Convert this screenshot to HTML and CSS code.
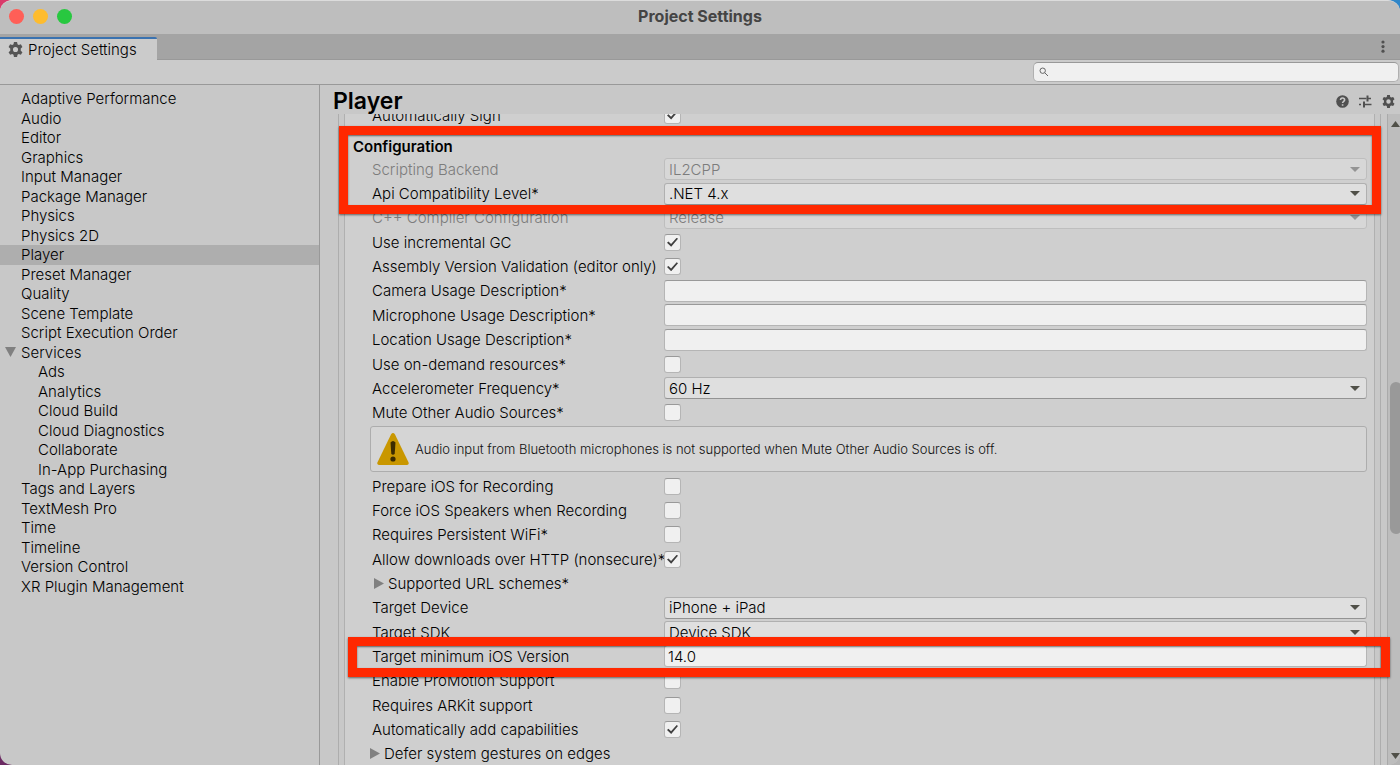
FILE: index.html
```html
<!DOCTYPE html>
<html lang="en">
<head>
<meta charset="utf-8">
<title>Project Settings</title>
<link rel="stylesheet" href="styles.css">
</head>
<body>
<svg class="defs" aria-hidden="true">
  <symbol id="gear" viewBox="0 0 24 24"><path fill-rule="evenodd" d="M9.500 0h5l.7 3.500 2 1.200 3.400-1.200 2.500 4.300-2.700 2.400v3.600l2.700 2.400-2.500 4.300-3.400-1.200-2 1.200-.7 3.500h-5l-.7-3.500-2-1.200-3.400 1.200L.9 16.200l2.700-2.400v-3.600L.9 7.800l2.500-4.300 3.400 1.200 2-1.200zM12 7.900a4.100 4.100 0 1 0 0 8.200a4.100 4.100 0 1 0 0-8.200z"/></symbol>
</svg>
<div class="window">
  <header class="titlebar">
    <div class="lights">
      <button class="light close" aria-label="Close"></button>
      <button class="light minimize" aria-label="Minimize"></button>
      <button class="light maximize" aria-label="Zoom"></button>
    </div>
    <h1>Project Settings</h1>
  </header>
  <div class="tabbar">
    <button class="tab"><svg class="icon-tab"><use href="#gear"/></svg>Project Settings</button>
    <button class="icon-button more" aria-label="More"><svg width="6" height="14" viewBox="0 0 6 14"><circle cx="3" cy="2" r="1.600"/><circle cx="3" cy="6.600" r="1.600"/><circle cx="3" cy="11.200" r="1.600"/></svg></button>
  </div>
  <div class="toolbar">
    <label class="search">
      <svg width="10" height="10" viewBox="0 0 10 10"><circle cx="3.700" cy="3.700" r="2.700"/><path d="M5.700 5.700L9 9"/></svg>
      <input type="search" aria-label="Search settings">
    </label>
  </div>
  <div class="body">
    <nav class="sidebar">
      <ul class="tree">
        <li><a href="#">Adaptive Performance</a></li>
        <li><a href="#">Audio</a></li>
        <li><a href="#">Editor</a></li>
        <li><a href="#">Graphics</a></li>
        <li><a href="#">Input Manager</a></li>
        <li><a href="#">Package Manager</a></li>
        <li><a href="#">Physics</a></li>
        <li><a href="#">Physics 2D</a></li>
        <li class="selected"><a href="#">Player</a></li>
        <li><a href="#">Preset Manager</a></li>
        <li><a href="#">Quality</a></li>
        <li><a href="#">Scene Template</a></li>
        <li><a href="#">Script Execution Order</a></li>
        <li class="parent"><svg width="11" height="10" viewBox="0 0 11 10"><path d="M0 0h11L5.500 10z"/></svg><a href="#">Services</a></li>
        <li class="child"><a href="#">Ads</a></li>
        <li class="child"><a href="#">Analytics</a></li>
        <li class="child"><a href="#">Cloud Build</a></li>
        <li class="child"><a href="#">Cloud Diagnostics</a></li>
        <li class="child"><a href="#">Collaborate</a></li>
        <li class="child"><a href="#">In-App Purchasing</a></li>
        <li><a href="#">Tags and Layers</a></li>
        <li><a href="#">TextMesh Pro</a></li>
        <li><a href="#">Time</a></li>
        <li><a href="#">Timeline</a></li>
        <li><a href="#">Version Control</a></li>
        <li><a href="#">XR Plugin Management</a></li>
      </ul>
    </nav>
    <main class="main">
      <div class="heading">
        <h2>Player</h2>
        <button class="icon-button" aria-label="Help"><svg width="13" height="13" viewBox="0 0 13 13"><circle cx="6.500" cy="6.500" r="6.300"/><path class="mark" d="M4.500 5.100c0-2.900 4.100-2.700 4.100-.2 0 1.300-2 1.500-2 3.100M6.600 9.200v1.500"/></svg></button>
        <button class="icon-button" aria-label="Presets"><svg width="13" height="13" viewBox="0 0 13 13"><path class="line" d="M0 3.500h7M7.500 3.500H12M0 9.500h2M4 9.500h8.500"/><path d="M7.500 .5h2v6h-2zM4 6.500h2v6H4z"/></svg></button>
        <button class="icon-button" aria-label="Settings"><svg width="13" height="13"><use href="#gear"/></svg></button>
      </div>
      <div class="viewport">
        <div class="outer"><form class="inner">
          <div class="row first"><label for="sign">Automatically Sign</label><input type="checkbox" id="sign" checked></div>
          <h3>Configuration</h3>
          <div class="group before">
            <div class="row off"><label for="backend">Scripting Backend</label><span class="drop"><select id="backend" disabled><option>IL2CPP</option></select></span></div>
            <div class="row"><label for="api">Api Compatibility Level*</label><span class="drop"><select id="api"><option>.NET 4.x</option></select></span></div>
            <div class="row off"><label for="cpp">C++ Compiler Configuration</label><span class="drop"><select id="cpp" disabled><option>Release</option></select></span></div>
            <div class="row"><label for="gc">Use incremental GC</label><input type="checkbox" id="gc" checked></div>
            <div class="row"><label for="asm">Assembly Version Validation (editor only)</label><input type="checkbox" id="asm" checked></div>
            <div class="row"><label for="cam">Camera Usage Description*</label><input type="text" id="cam"></div>
            <div class="row"><label for="mic">Microphone Usage Description*</label><input type="text" id="mic"></div>
            <div class="row"><label for="loc">Location Usage Description*</label><input type="text" id="loc"></div>
            <div class="row"><label for="odr">Use on-demand resources*</label><input type="checkbox" id="odr"></div>
            <div class="row"><label for="acc">Accelerometer Frequency*</label><span class="drop"><select id="acc"><option>60 Hz</option></select></span></div>
            <div class="row"><label for="mute">Mute Other Audio Sources*</label><input type="checkbox" id="mute"></div>
          </div>
          <div class="notice">
            <svg width="32" height="32" viewBox="0 0 32 32"><path class="warn" d="M14 1.500Q16-1.300 18 1.500L31.600 29.500Q32 32 30 32H2Q0 32 .4 29.500z"/><path d="M13.500 9.500q2.500-3 5 0l-.8 11.500q-1.700 1.600-3.400 0z"/><circle cx="16" cy="26" r="2.600"/></svg>
            <p>Audio input from Bluetooth microphones is not supported when Mute Other Audio Sources is off.</p>
          </div>
          <div class="group after">
            <div class="row"><label for="prep">Prepare iOS for Recording</label><input type="checkbox" id="prep"></div>
            <div class="row"><label for="force">Force iOS Speakers when Recording</label><input type="checkbox" id="force"></div>
            <div class="row"><label for="wifi">Requires Persistent WiFi*</label><input type="checkbox" id="wifi"></div>
            <div class="row"><label for="http">Allow downloads over HTTP (nonsecure)*</label><input type="checkbox" id="http" checked></div>
            <div class="row"><button type="button" class="fold nested"><svg width="10" height="11" viewBox="0 0 10 11"><path d="M0 0v11l10-5.500z"/></svg>Supported URL schemes*</button></div>
            <div class="row"><label for="device">Target Device</label><span class="drop"><select id="device"><option>iPhone + iPad</option></select></span></div>
            <div class="row"><label for="sdk">Target SDK</label><span class="drop"><select id="sdk"><option>Device SDK</option></select></span></div>
            <div class="row"><label for="ios">Target minimum iOS Version</label><input type="text" id="ios" value="14.0"></div>
            <div class="row"><label for="promo">Enable ProMotion Support</label><input type="checkbox" id="promo"></div>
            <div class="row"><label for="arkit">Requires ARKit support</label><input type="checkbox" id="arkit"></div>
            <div class="row"><label for="caps">Automatically add capabilities</label><input type="checkbox" id="caps" checked></div>
            <div class="row"><button type="button" class="fold"><svg width="10" height="11" viewBox="0 0 10 11"><path d="M0 0v11l10-5.500z"/></svg>Defer system gestures on edges</button></div>
          </div>
        </form></div>
        <div class="scrollbar">
          <svg width="9" height="6" viewBox="0 0 9 6"><path d="M0 6L4.500 0 9 6z"/></svg>
          <div class="track"><div class="thumb"></div></div>
          <svg width="9" height="6" viewBox="0 0 9 6"><path d="M0 0h9L4.500 6z"/></svg>
        </div>
      </div>
      <div class="callout config"></div>
      <div class="callout version"></div>
    </main>
  </div>
</div>
</body>
</html>
```
FILE: styles.css
```css
* { box-sizing: border-box; }
body {
  margin: 0;
  background: linear-gradient(90deg, #d93a6a 50%, #2f86c8 50%) top / 100% 50% no-repeat, linear-gradient(90deg, #6b2a62 50%, #b5b5b5 50%);
  font: 300 15px/19px Inter, "Liberation Sans", sans-serif;
  color: #000;
}
h1, h2, h3, p, ul { margin: 0; padding: 0; }
button, input, select { font: inherit; color: inherit; margin: 0; padding: 0; border: 0; background: none; }
a { color: inherit; text-decoration: none; }
.defs { display: none; }
.window {
  height: 100vh;
  display: flex;
  flex-direction: column;
  overflow: hidden;
  border-top: 1px solid #dcdcdc;
  border-radius: 12px;
  background: #c8c8c8;
}
.titlebar {
  height: 33px;
  flex: none;
  display: grid;
  grid-template-columns: 1fr auto 1fr;
  align-items: center;
  padding: 0 9px 2px;
  background: #bebebe;
}
.titlebar h1 { font-size: 16px; line-height: 19px; font-weight: 700; color: #444; }
.lights { display: flex; gap: 9px; }
.light { width: 15px; height: 15px; border-radius: 50%; }
.close { background: #ff5f57; }
.minimize { background: #febc2e; }
.maximize { background: #28c840; }
.tabbar {
  height: 26px;
  flex: none;
  display: flex;
  align-items: flex-end;
  justify-content: space-between;
  background: #a4a4a4;
  box-shadow: inset 0 -1px #999;
}
.tab {
  height: 23px;
  display: flex;
  align-items: center;
  gap: 5px;
  padding: 0 20px 1px 8px;
  border-top: 2px solid #3a72b0;
  border-radius: 0 2px 0 0;
  background: #cbcbcb;
}
.icon-tab { width: 15px; height: 15px; fill: #555; }
.icon-button { display: flex; fill: #505050; }
.more { padding: 0 14px 6px 0; }
.toolbar {
  height: 25px;
  flex: none;
  display: flex;
  justify-content: flex-end;
  align-items: flex-start;
  padding: 2px 1px 0 0;
  background: #cbcbcb;
  border-bottom: 1px solid #999;
}
.search {
  width: 366px;
  height: 20px;
  display: flex;
  align-items: center;
  gap: 5px;
  padding: 0 5px;
  border: 1px solid #b0b0b0;
  border-top-color: #999;
  border-radius: 5px;
  background: #f0f0f0;
}
.search svg { fill: none; stroke: #666; stroke-width: 1; }
.search input { flex: 1; min-width: 0; outline: 0; }
.body { flex: 1; min-height: 0; display: flex; }
.sidebar { width: 320px; flex: none; padding-top: 4px; border-right: 1px solid #999; }
.tree { list-style: none; display: grid; grid-auto-rows: 1fr; min-height: 507px; }
.tree li { display: flex; align-items: center; padding-left: 21px; }
.tree .selected { background: #aeaeae; }
.tree .parent { padding-left: 5px; gap: 5px; fill: #808080; }
.tree .child { padding-left: 38px; }
.main { flex: 1; min-width: 0; position: relative; display: flex; flex-direction: column; }
.heading { height: 29px; flex: none; display: flex; align-items: center; gap: 10px; padding: 4px 5px 0 13px; }
.heading h2 { flex: 1; font-size: 23px; line-height: 25px; font-weight: 600; color: #000; }
.mark { fill: none; stroke: #c8c8c8; stroke-width: 1.600; }
.line { fill: none; stroke: #505050; stroke-width: 1.500; }
.viewport { flex: 1; min-height: 0; display: flex; overflow: hidden; }
.outer {
  flex: 1;
  min-width: 0;
  display: flex;
  margin: 0 6px 0 18px;
  padding: 0 5px;
  border: solid #adadad;
  border-width: 0 1px;
}
.inner {
  flex: 1;
  min-width: 0;
  margin-top: -11px;
  padding: 0 7px 0 25px;
  border: solid #b0b0b0;
  border-width: 0 1px;
  background: #cfcfcf;
}
.inner h3 { height: 22px; margin: 8px 0 0 -17px; font-size: 15px; line-height: 24px; font-weight: 600; }
.group { display: grid; grid-auto-rows: 1fr; }
.before { min-height: 268px; }
.after { min-height: 292px; }
.row { display: grid; grid-template-columns: 292px 1fr; align-items: center; padding-left: 2px; }
.first { height: 24px; }
.row label { white-space: nowrap; }
.off { color: #7c7c7c; }
.drop { display: grid; align-items: center; }
.drop select, .drop::after { grid-area: 1 / 1; }
.drop::after {
  content: "";
  justify-self: end;
  margin-right: 7px;
  border: solid transparent;
  border-width: 5px 5px 0;
  border-top-color: #505048;
}
.off .drop::after { border-top-color: #949494; }
.row select {
  appearance: none;
  width: 100%;
  height: 22px;
  padding: 0 4px;
  border: 1px solid #b0b0b0;
  border-bottom-color: #939393;
  border-radius: 3px;
  background: #dfdfdf;
}
.row select:disabled { opacity: 1; color: #7c7c7c; background: #d7d7d7; border-color: #bebebe; }
.row input[type="text"] {
  width: 100%;
  height: 22px;
  padding: 0 3px;
  border: 1px solid #b5b5b5;
  border-top-color: #999;
  border-radius: 3px;
  background: #f0f0f0;
}
.row input[type="checkbox"] {
  appearance: none;
  width: 17px;
  height: 17px;
  border: 1px solid #b5b5b5;
  border-top-color: #999;
  border-radius: 3px;
  background: #f0f0f0;
  display: grid;
  place-items: center;
}
.row input:checked::before {
  content: "";
  width: 11px;
  height: 9px;
  background: #404040;
  clip-path: polygon(0 55%, 13% 42%, 37% 70%, 88% 0, 100% 12%, 38% 100%);
}
.notice {
  min-height: 46px;
  display: flex;
  align-items: center;
  gap: 6px;
  margin: 1px 0 2px;
  padding: 0 6px;
  border: 1px solid #adadad;
  border-radius: 3px;
  background: #d5d5d5;
  font-size: 13px;
  color: #101010;
}
.notice svg { fill: #3c2c00; }
.notice .warn { fill: #c99700; }
.fold { grid-column: 1 / -1; display: flex; align-items: center; gap: 4px; margin-left: -2px; fill: #808080; }
.nested { padding-left: 4px; }
.scrollbar {
  width: 13px;
  display: flex;
  flex-direction: column;
  align-items: center;
  padding: 7px 0 6px 2px;
  border-left: 1px solid #aaa;
  background: #bdbdbd;
  fill: #505048;
}
.track { flex: 1; align-self: stretch; }
.thumb { width: 12px; height: 152px; margin-top: 255px; border-radius: 6px; background: #999; }
.callout { position: absolute; border: 9px solid #ff2800; box-shadow: 0 1px 2px #0008, inset 0 1px 2px #0008; pointer-events: none; }
.config { left: 19px; right: 19px; top: 41px; height: 88px; }
.version { left: 28px; right: 10px; top: 552px; height: 40px; }
```
